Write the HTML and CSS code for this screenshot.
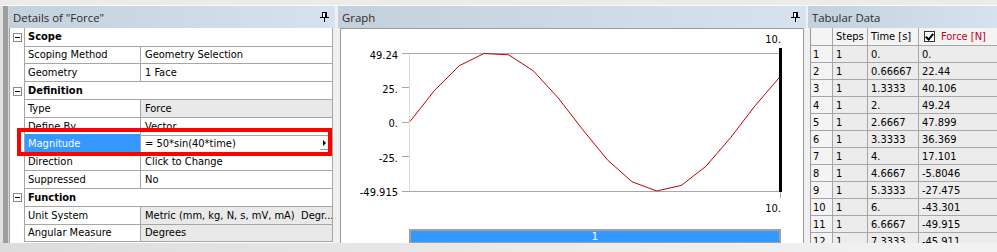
FILE: index.html
```html
<!DOCTYPE html>
<html>
<head>
<meta charset="utf-8">
<link rel="stylesheet" href="styles.css">
</head>
<body>
<div class="screen">
  <div class="topstrip"></div>
  <div class="main">
    <div class="edge"></div>

    <section class="panel details">
      <div class="hdr"><span class="title">Details of "Force"</span>
        <svg class="pin" width="9" height="11" viewBox="0 0 9 11"><rect x="2.5" y="0.5" width="4" height="5" fill="#fff" stroke="#000"/><rect x="5" y="1" width="1" height="4" fill="#000"/><rect x="0" y="5" width="9" height="1" fill="#000"/><rect x="4" y="6" width="1" height="4" fill="#000"/></svg>
      </div>
      <div class="dbody">
        <div class="row sec"><span class="exp"><i class="box"></i></span><span class="sname">Scope</span></div>
        <div class="row"><span class="exp"></span><span class="lbl">Scoping Method</span><span class="val">Geometry Selection</span></div>
        <div class="row"><span class="exp"></span><span class="lbl">Geometry</span><span class="val">1 Face</span></div>
        <div class="row sec"><span class="exp"><i class="box"></i></span><span class="sname">Definition</span></div>
        <div class="row"><span class="exp"></span><span class="lbl">Type</span><span class="val ro">Force</span></div>
        <div class="row"><span class="exp"></span><span class="lbl">Define By</span><span class="val">Vector</span></div>
        <div class="row sel"><span class="exp"></span><span class="lbl">Magnitude</span><span class="val">= 50*sin(40*time)<i class="btn"><b></b></i></span></div>
        <div class="row"><span class="exp"></span><span class="lbl">Direction</span><span class="val">Click to Change</span></div>
        <div class="row"><span class="exp"></span><span class="lbl">Suppressed</span><span class="val">No</span></div>
        <div class="row sec"><span class="exp"><i class="box"></i></span><span class="sname">Function</span></div>
        <div class="row"><span class="exp"></span><span class="lbl">Unit System</span><span class="val ro">Metric (mm, kg, N, s, mV, mA)&nbsp; Degr...</span></div>
        <div class="row"><span class="exp"></span><span class="lbl">Angular Measure</span><span class="val ro">Degrees</span></div>
      </div>
    </section>

    <div class="gap3"></div>

    <section class="panel graph">
      <div class="hdr"><span class="title">Graph</span>
        <svg class="pin" width="9" height="11" viewBox="0 0 9 11"><rect x="2.5" y="0.5" width="4" height="5" fill="#fff" stroke="#000"/><rect x="5" y="1" width="1" height="4" fill="#000"/><rect x="0" y="5" width="9" height="1" fill="#000"/><rect x="4" y="6" width="1" height="4" fill="#000"/></svg>
      </div>
      <div class="gbody">
        <svg class="plot" width="462" height="214" viewBox="341 29 462 214">
          <line x1="409.5" y1="54" x2="409.5" y2="191" stroke="#dcdcdc"/>
          <line x1="402" y1="53.5" x2="780" y2="53.5" stroke="#a8a8a8"/>
          <line x1="402" y1="191.5" x2="780" y2="191.5" stroke="#a8a8a8"/>
          <line x1="402" y1="87.5" x2="409" y2="87.5" stroke="#a8a8a8"/>
          <line x1="402" y1="122.5" x2="409" y2="122.5" stroke="#a8a8a8"/>
          <line x1="402" y1="156.5" x2="409" y2="156.5" stroke="#a8a8a8"/>
          <polyline fill="none" stroke="#c00000" stroke-width="1" points="410,121.5 434.67,90.27 459.33,65.68 484,53.5 508.67,54.83 533.33,70.88 558,97.7 582.67,129.58 607.33,159.74 632,181.77 656.67,190.97 681.33,185.4 706,166.23 730.67,137.55 755.33,105.45 780,76.77"/>
          <rect x="779" y="48" width="3" height="144" fill="#000"/>
          <line x1="780.5" y1="192" x2="780.5" y2="198" stroke="#a8a8a8"/>
          <g class="ylab">
            <text x="398" y="59">49.24</text>
            <text x="398" y="93">25.</text>
            <text x="398" y="127">0.</text>
            <text x="398" y="162">-25.</text>
            <text x="398" y="196">-49.915</text>
            <text x="781" y="43">10.</text>
            <text x="781" y="212">10.</text>
          </g>
          <rect x="409" y="229" width="372" height="14" fill="#a0a0a0"/>
          <rect x="411" y="231" width="368" height="11" fill="#3399ff"/>
          <text class="step" x="595" y="240">1</text>
        </svg>
      </div>
    </section>

    <div class="gap2"></div>

    <section class="panel tab">
      <div class="hdr"><span class="title">Tabular Data</span></div>
      <div class="tbody">
        <div class="trow th"><span class="c1"></span><span class="c2">Steps</span><span class="c3">Time [s]</span><span class="c4"><i class="chk"></i><em>Force [N]</em></span></div>
        <div class="trow"><span class="c1">1</span><span class="c2">1</span><span class="c3">0.</span><span class="c4">0.</span></div>
        <div class="trow"><span class="c1">2</span><span class="c2">1</span><span class="c3">0.66667</span><span class="c4">22.44</span></div>
        <div class="trow"><span class="c1">3</span><span class="c2">1</span><span class="c3">1.3333</span><span class="c4">40.106</span></div>
        <div class="trow"><span class="c1">4</span><span class="c2">1</span><span class="c3">2.</span><span class="c4">49.24</span></div>
        <div class="trow"><span class="c1">5</span><span class="c2">1</span><span class="c3">2.6667</span><span class="c4">47.899</span></div>
        <div class="trow"><span class="c1">6</span><span class="c2">1</span><span class="c3">3.3333</span><span class="c4">36.369</span></div>
        <div class="trow"><span class="c1">7</span><span class="c2">1</span><span class="c3">4.</span><span class="c4">17.101</span></div>
        <div class="trow"><span class="c1">8</span><span class="c2">1</span><span class="c3">4.6667</span><span class="c4">-5.8046</span></div>
        <div class="trow"><span class="c1">9</span><span class="c2">1</span><span class="c3">5.3333</span><span class="c4">-27.475</span></div>
        <div class="trow"><span class="c1">10</span><span class="c2">1</span><span class="c3">6.</span><span class="c4">-43.301</span></div>
        <div class="trow"><span class="c1">11</span><span class="c2">1</span><span class="c3">6.6667</span><span class="c4">-49.915</span></div>
        <div class="trow"><span class="c1">12</span><span class="c2">1</span><span class="c3">7.3333</span><span class="c4">-45.911</span></div>
      </div>
    </section>
  </div>
  <div class="bottomstrip"></div>
  <div class="redbox"></div>
</div>
</body>
</html>
```
FILE: styles.css
```css
* { box-sizing: border-box; }
html, body { margin: 0; padding: 0; }
body {
  width: 997px; height: 252px; overflow: hidden;
  background: #f0f0f0;
  font-family: "DejaVu Sans Condensed", "DejaVu Sans", sans-serif;
  font-stretch: condensed;
  font-size: 11px;
  color: #000;
}
.screen { position: relative; width: 997px; height: 252px; }
.topstrip { height: 6px; background: linear-gradient(#ebebeb 0 5px, #fafafa 5px); }
.main { display: flex; height: 237px; }
.bottomstrip { height: 9px; background: linear-gradient(to right, #dcdcdc, #ececec 60%, #f2f2f2); }
.edge { width: 9px; background: linear-gradient(to right, #e2e2e2 0 3px, #9e9e9e 3px 8px, #d8d8d8 8px); }
.gap3 { width: 3px; }
.gap2 { width: 2px; }

.panel { display: flex; flex-direction: column; }
.details { width: 326px; }
.graph { width: 468px; }
.tab { width: 189px; }

.hdr {
  height: 22px; flex: none;
  display: flex; align-items: center; justify-content: space-between;
  padding: 0 6px 0 4px;
  background: linear-gradient(to right, #c4d0dc, #d6e2ef);
  font-family: "Open Sans", "Noto Sans", sans-serif;
  font-stretch: normal;
  font-size: 11.4px; color: #2b2b2b;
}
.pin { display: block; }

/* details */
.dbody {
  flex: 1; background: #fff;
  border-left: 1px solid #a6a6a6;
  padding-top: 0;
  margin-right: 2px;
  display: flex; flex-direction: column;
}
.row {
  display: grid;
  grid-template-columns: 14px 117px 192px;
  height: 17.8px;
  flex: none;
}
.row:first-child { height: 18.6px; }
.row > span { display: flex; align-items: center; white-space: nowrap; overflow: hidden; }
.exp { padding-left: 3px; justify-content: flex-start; }
.box {
  display: block; width: 9px; height: 9px; border: 1px solid #8a8a8a; position: relative;
  background: #fff;
}
.box::after { content: ""; position: absolute; left: 1px; top: 3px; width: 5px; height: 1px; background: #000; }
.lbl { border-left: 1px solid #a6a6a6; border-right: 1px solid #a6a6a6; border-bottom: 1px solid #a6a6a6; padding-left: 3px; }
.val { border-right: 1px solid #a6a6a6; border-bottom: 1px solid #a6a6a6; padding-left: 4px; }
.val.ro { background: #e9e9e9; }
.sname { grid-column: 2 / 4; border-left: 1px solid #a6a6a6; border-right: 1px solid #a6a6a6; border-bottom: 1px solid #a6a6a6; padding-left: 3px; font-weight: bold; }
.sel { height: 18.4px; margin-top: -1.2px; margin-bottom: 0.6px; }
.sel .lbl { background: #3399ff; color: #fff; }
.sel .val { justify-content: space-between; padding-right: 2px; }
.btn {
  display: flex; align-items: center; justify-content: center;
  width: 10px; height: 13px; border-right: 1px solid #9a9a9a; border-bottom: 1px solid #9a9a9a;
  background: #fff;
}
.btn b { display: block; width: 0; height: 0; border-top: 3px solid transparent; border-bottom: 3px solid transparent; border-left: 3px solid #000; }

/* graph */
.gbody {
  flex: 1; background: #fff;
  margin: 0 2px;
  border: 1px solid #9a9a9a; border-bottom: 0;
}
.plot { display: block; }
.ylab text { font-family: "DejaVu Sans Condensed", "DejaVu Sans", sans-serif; font-stretch: condensed; font-size: 11px; text-anchor: end; fill: #000; }
.step { font-family: "DejaVu Sans Condensed", "DejaVu Sans", sans-serif; font-size: 11px; fill: #fff; text-anchor: middle; }

/* tabular */
.tbody {
  flex: 1; background: #fff;
  margin-left: 2px;
  border-left: 1px solid #9a9a9a;
  display: flex; flex-direction: column;
  overflow: hidden;
}
.trow { display: grid; grid-template-columns: 22px 35px 51px 80px; height: 17px; flex: none; }
.trow.th { height: 18px; }
.trow > span { display: flex; align-items: center; white-space: nowrap; border-right: 1px solid #a6a6a6; border-bottom: 1px solid #a6a6a6; background: #ececec; padding-left: 3px; }
.trow.th > span { background: #f4f4f4; }
.trow .c1 { padding-left: 2px; background: #f4f4f4; }
.trow .c4 { border-right: 0; }
.th .c4 { padding-left: 5px; }
.chk { display: block; width: 11px; height: 11px; border: 1px solid #333; background: #fff; margin-right: 6px; position: relative; }
.chk::after { content: ""; position: absolute; left: 2px; top: 0px; width: 3px; height: 6px; border-right: 2px solid #000; border-bottom: 2px solid #000; transform: rotate(40deg); }
.th em { font-style: normal; color: #c00018; }

.redbox {
  position: absolute; left: 17px; top: 128px; width: 315px; height: 28px;
  border: 4px solid #ff0000;
}
```
